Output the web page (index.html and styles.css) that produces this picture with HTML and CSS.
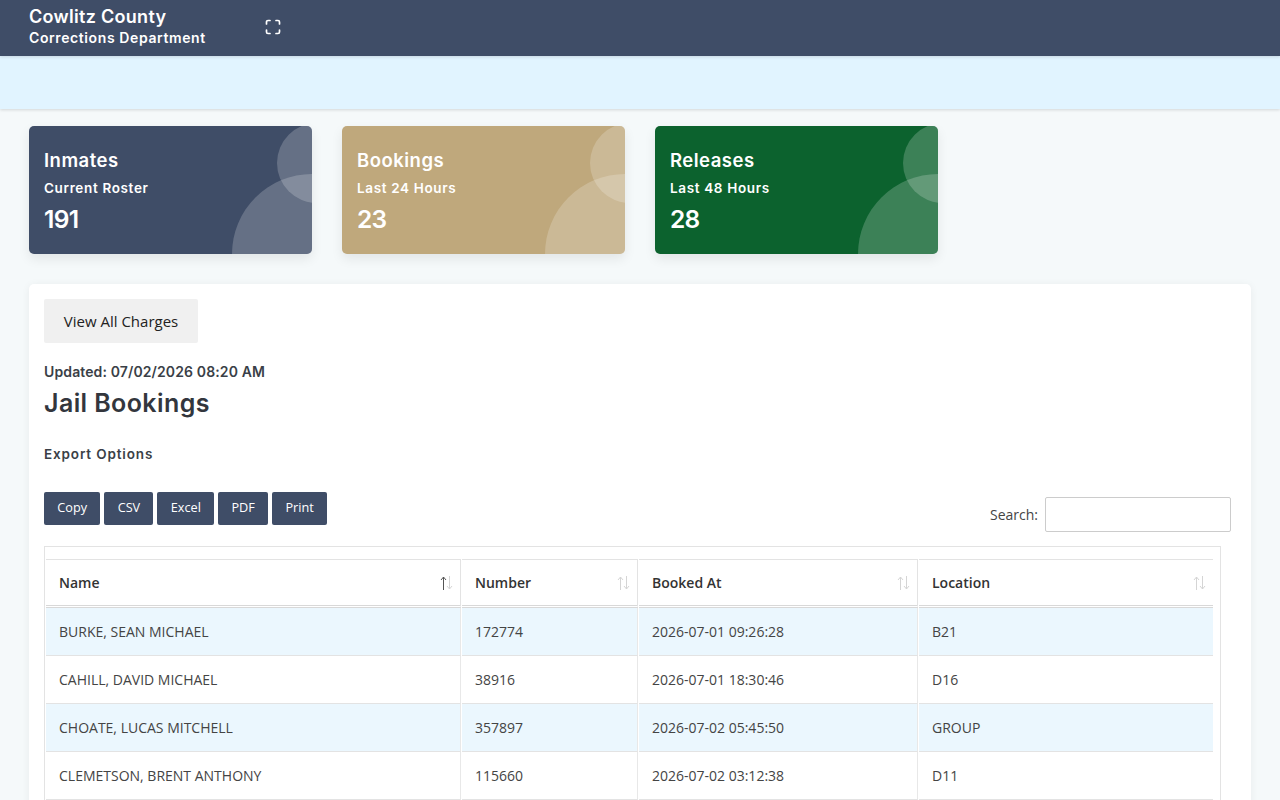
FILE: index.html
```html
<!DOCTYPE html>
<html lang="en">
<head>
<meta charset="utf-8">
<title>Cowlitz County Corrections Department</title>
<link rel="stylesheet" href="styles.css">
</head>
<body>
<header class="topbar">
  <div class="brand">
    <div class="brand-title">Cowlitz County</div>
    <div class="brand-sub">Corrections Department</div>
  </div>
  <svg class="expand" viewBox="0 0 16 16" width="16" height="16" fill="none" stroke="#fff" stroke-width="1.7" stroke-linecap="round" stroke-linejoin="round">
    <path d="M1.5 5V3a1.5 1.5 0 0 1 1.5-1.5h2M11 1.500h2A1.500 1.500 0 0 1 14.500 3v2M14.500 11v2a1.500 1.500 0 0 1-1.500 1.500h-2M5 14.500H3A1.500 1.500 0 0 1 1.500 13v-2"/>
  </svg>
</header>
<div class="subbar"></div>
<main class="content">
  <section class="stats">
    <div class="stat stat-navy">
      <div class="stat-title">Inmates</div>
      <div class="stat-sub">Current Roster</div>
      <div class="stat-num">191</div>
    </div>
    <div class="stat stat-tan">
      <div class="stat-title">Bookings</div>
      <div class="stat-sub">Last 24 Hours</div>
      <div class="stat-num">23</div>
    </div>
    <div class="stat stat-green">
      <div class="stat-title">Releases</div>
      <div class="stat-sub">Last 48 Hours</div>
      <div class="stat-num">28</div>
    </div>
  </section>
  <section class="panel">
    <button class="charges">View All Charges</button>
    <div class="updated">Updated: 07/02/2026 08:20 AM</div>
    <h1 class="heading">Jail Bookings</h1>
    <div class="export-label">Export Options</div>
    <div class="toolbar">
      <div class="btns">
        <button class="btn">Copy</button>
        <button class="btn">CSV</button>
        <button class="btn">Excel</button>
        <button class="btn">PDF</button>
        <button class="btn">Print</button>
      </div>
      <label class="search">Search:<input class="search-input" type="text"></label>
    </div>
    <div class="table-wrap">
      <table class="grid">
        <colgroup>
          <col class="c1"><col class="c2"><col class="c3"><col class="c4">
        </colgroup>
        <thead>
          <tr>
            <th>Name<svg class="sort" viewBox="0 0 14 16" width="14" height="16"><path class="up on" d="M4.500 15V2M2 5l2.500-3L7 5"/><path class="down" d="M10.500 1v13M8 11l2.500 3L13 11"/></svg></th>
            <th>Number<svg class="sort" viewBox="0 0 14 16" width="14" height="16"><path class="up" d="M4.500 15V2M2 5l2.500-3L7 5"/><path class="down" d="M10.500 1v13M8 11l2.500 3L13 11"/></svg></th>
            <th>Booked At<svg class="sort" viewBox="0 0 14 16" width="14" height="16"><path class="up" d="M4.500 15V2M2 5l2.500-3L7 5"/><path class="down" d="M10.500 1v13M8 11l2.500 3L13 11"/></svg></th>
            <th>Location<svg class="sort" viewBox="0 0 14 16" width="14" height="16"><path class="up" d="M4.500 15V2M2 5l2.500-3L7 5"/><path class="down" d="M10.500 1v13M8 11l2.500 3L13 11"/></svg></th>
          </tr>
        </thead>
        <tbody>
          <tr class="odd"><td>BURKE, SEAN MICHAEL</td><td>172774</td><td>2026-07-01 09:26:28</td><td>B21</td></tr>
          <tr><td>CAHILL, DAVID MICHAEL</td><td>38916</td><td>2026-07-01 18:30:46</td><td>D16</td></tr>
          <tr class="odd"><td>CHOATE, LUCAS MITCHELL</td><td>357897</td><td>2026-07-02 05:45:50</td><td>GROUP</td></tr>
          <tr><td>CLEMETSON, BRENT ANTHONY</td><td>115660</td><td>2026-07-02 03:12:38</td><td>D11</td></tr>
        </tbody>
      </table>
    </div>
  </section>
</main>
</body>
</html>
```
FILE: styles.css
```css
* { box-sizing: border-box; }
html, body { margin: 0; height: 800px; overflow: hidden; }
body {
  background: #f5f9fa;
  font-family: "Open Sans", "Liberation Sans", sans-serif;
  color: #3a3a3a;
}
.topbar {
  height: 56px;
  background: #3f4d67;
  color: #fff;
  display: flex;
  align-items: center;
  padding-left: 29px;
  position: relative;
  z-index: 2;
  box-shadow: 0 1px 3px rgba(0,0,0,.12);
}
.brand { width: 236px; font-family: Inter, "Noto Sans", sans-serif; font-weight: 600; }
.brand-title { font-size: 18px; line-height: 24px; margin-top: -4px; letter-spacing: .3px; }
.brand-sub { font-size: 14px; line-height: 18px; letter-spacing: .6px; }
.expand { display: block; margin-top: -3px; }
.subbar {
  height: 53px;
  background: #e1f4ff;
  box-shadow: 0 1px 3px rgba(0,0,0,.14);
}
.content { padding: 17px 29px 0; }
.stats { display: flex; gap: 30px; }
.stat {
  position: relative;
  overflow: hidden;
  width: 283px;
  height: 128px;
  padding: 22px 15px 0;
  border-radius: 5px;
  color: #fff;
  font-family: Inter, "Noto Sans", sans-serif;
  box-shadow: 0 5px 12px rgba(0,0,0,.08);
}
.stat::before, .stat::after {
  content: "";
  position: absolute;
  border-radius: 50%;
  background: rgba(255,255,255,.2);
}
.stat::before { width: 160px; height: 160px; left: 203px; top: 48px; }
.stat::after { width: 80px; height: 80px; left: 248px; top: -3px; }
.stat-navy { background: #3f4d67; }
.stat-tan { background: #bfa87c; }
.stat-green { background: #0c622e; }
.stat-title { font-size: 18.500px; line-height: 24px; font-weight: 600; letter-spacing: .5px; }
.stat-sub { font-size: 13.500px; line-height: 18px; margin-top: 7px; font-weight: 600; letter-spacing: .65px; }
.stat-num { font-size: 24.500px; line-height: 30px; margin-top: 7px; font-weight: 600; letter-spacing: -.7px; }
.panel {
  margin-top: 30px;
  background: #fff;
  width: 1222px;
  height: 560px;
  padding: 15px;
  border-radius: 5px;
  box-shadow: 0 1px 8px rgba(0,0,0,.06);
}
.charges {
  display: block;
  width: 154px;
  height: 44px;
  border: 0;
  border-radius: 2px;
  background: #f0f0f0;
  color: #222;
  font: 400 15px "Open Sans", sans-serif;
}
.updated {
  margin-top: 19px;
  font: 600 14px/20px Inter, "Noto Sans", sans-serif;
  color: #3a3f47;
  letter-spacing: .12px;
}
.heading {
  margin: 6px 0 0;
  font: 600 25px/30px Inter, "Noto Sans", sans-serif;
  color: #33363d;
  letter-spacing: .4px;
}
.export-label {
  margin-top: 26px;
  font: 600 13.500px/20px Inter, "Noto Sans", sans-serif;
  color: #3a3f47;
  letter-spacing: .85px;
}
.toolbar {
  display: flex;
  justify-content: space-between;
  margin-top: 28px;
  height: 54px;
  padding-right: 5px;
}
.btns { display: flex; gap: 4px; height: 33px; }
.btn {
  border: 0;
  border-radius: 2px;
  background: #3f4d67;
  color: #fff;
  padding: 0 13.300px 3px;
  font: 400 12.700px "Open Sans", sans-serif;
  height: 33px;
}
.search {
  display: flex;
  align-items: center;
  gap: 7px;
  height: 35px;
  margin-top: 5px;
  font-size: 14px;
  color: #444;
}
.search-input {
  width: 186px;
  height: 35px;
  border: 1px solid #ccc;
  border-radius: 2px;
  background: #fff;
}
.table-wrap {
  width: 1177px;
  height: 300px;
  border: 1px solid #e3e3e3;
  padding: 12px 6px 0 0;
}
.grid {
  border-collapse: separate;
  border-spacing: 1px 0;
  width: 1169px;
  table-layout: fixed;
  font-size: 14px;
}
.c1 { width: 415px; }
.c2 { width: 176px; }
.c3 { width: 279px; }
.c4 { width: 294px; }
th {
  position: relative;
  height: 49px;
  text-align: left;
  padding: 0 13px;
  font-weight: 600;
  color: #333;
  background: #fff;
  border-top: 1px solid #e3e3e3;
  border-right: 1px solid #e3e3e3;
  border-bottom: 3px double #d8d8d8;
}
th:last-child { border-right: 0; }
td {
  height: 48px;
  padding: 0 13px;
  color: #444;
  border-bottom: 1px solid #e3e3e3;
  border-right: 1px solid #e8e8e8;
}
td:last-child { border-right: 0; }
.odd td { background: #ebf7fe; }
.sort {
  position: absolute;
  right: 7px;
  top: 15px;
  fill: none;
  stroke-width: 1;
  stroke: #d5d5d5;
}
.sort .on { stroke: #555; }
```
